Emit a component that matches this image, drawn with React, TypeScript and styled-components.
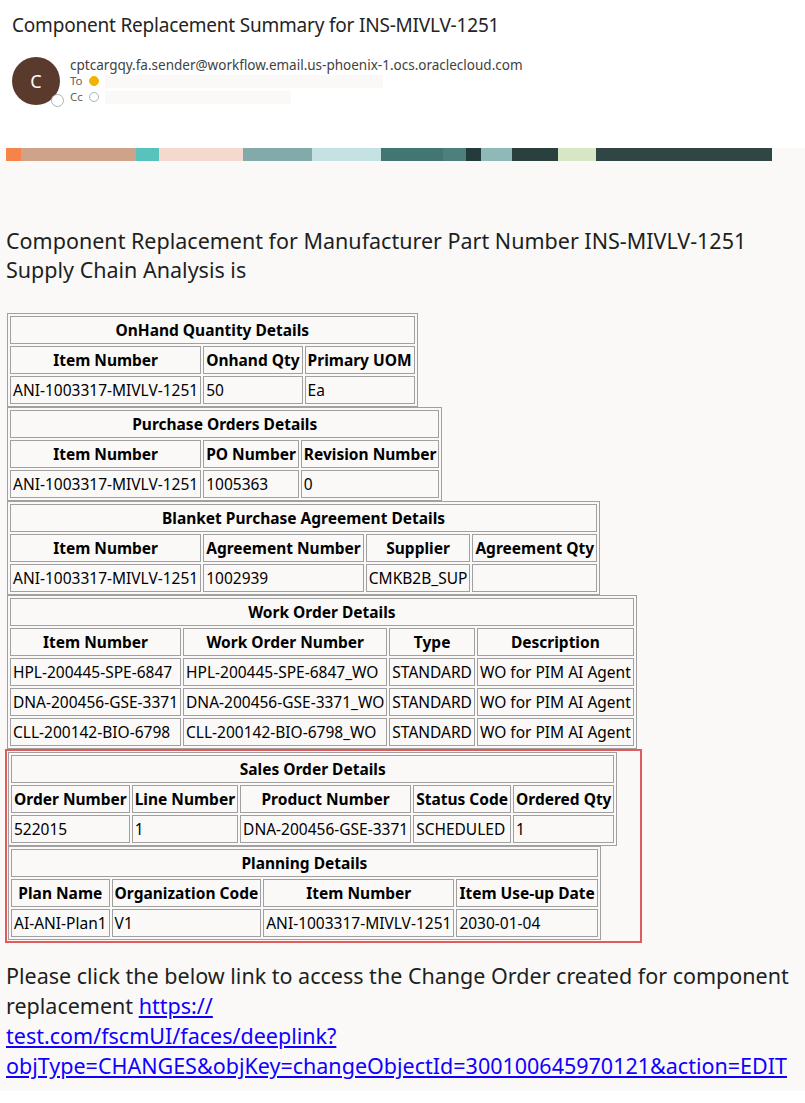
import React from "react";
import styled, { createGlobalStyle } from "styled-components";

const Global = createGlobalStyle`
  body { margin: 0; background: #fff; font-family: "Noto Sans", "Open Sans", sans-serif; color: #201f1e; }
`;

const Header = styled.div`
  background: #fff;
  padding: 12px 12px 0 12px;
  height: 148px;
  box-sizing: border-box;
`;

const Subject = styled.div`
  font-size: 19px;
  color: #242424;
  letter-spacing: -0.2px;
`;

const SenderRow = styled.div`
  display: flex;
  gap: 10px;
  margin-top: 19px;
`;

const Avatar = styled.div`
  position: relative;
  width: 48px;
  height: 48px;
  border-radius: 50%;
  background: #5b3a2e;
  color: #fff;
  display: flex;
  align-items: center;
  justify-content: center;
  font-size: 18px;
  flex-shrink: 0;
`;

const Presence = styled.span`
  position: absolute;
  right: -4px;
  bottom: -2px;
  width: 11px;
  height: 11px;
  border-radius: 50%;
  background: #fff;
  border: 1.5px solid #a8b4bd;
`;

const SenderInfo = styled.div`
  font-size: 13.5px;
  color: #424242;
  line-height: 16px;
`;

const Recip = styled.div`
  display: flex;
  align-items: center;
  gap: 6px;
  font-size: 11.5px;
  color: #616161;
`;

const Dot = styled.span<{ $on?: boolean }>`
  width: 8px;
  height: 8px;
  border-radius: 50%;
  background: ${(p) => (p.$on ? "#f2b200" : "#fff")};
  border: 1px solid ${(p) => (p.$on ? "#f2b200" : "#a8b4bd")};
`;

const Redact = styled.span<{ $w: number }>`
  display: inline-block;
  width: ${(p) => p.$w}px;
  height: 13px;
  background: #faf9f8;
`;

const Body = styled.div`
  background: #faf9f8;
  padding: 0 6px 10px 6px;
`;

const Banner = styled.div`
  width: 766px;
  height: 13px;
  background: linear-gradient(90deg, #f6844a 0 2%, #cfa28a 2% 17%, #58c3bd 17% 20%, #f5d9cf 20% 31%, #82aaa8 31% 40%, #c4e2e2 40% 49%, #427670 49% 57%, #4d7f7c 57% 60%, #233c3a 60% 62%, #8fb9b6 62% 66%, #29403f 66% 72%, #d7e6c4 72% 77%, #2f4644 77% 100%);
`;

const Title = styled.div`
  font-size: 21.5px;
  line-height: 29px;
  margin: 65px 0 29px 0;
  color: #201f1e;
`;

const Table = styled.table`
  border: 1px solid #a0a0a0;
  border-spacing: 2px;
  font-size: 15.5px;
  margin-left: 1px;
  td, th {
    border: 1px solid #a0a0a0;
    padding: 1px 2px;
    height: 24px;
    white-space: nowrap;
    color: #000;
  }
  th { font-weight: 700; text-align: center; }
  td { text-align: left; }
`;

const RedBox = styled.div`
  width: 632px;
  border: 2px solid #e35a5a;
  padding: 1px 1px 1px 0;
  margin-left: -1px;
`;

const Closing = styled.p`
  font-size: 21.5px;
  line-height: 30px;
  margin: 18px 0 0 0;
  color: #201f1e;
  a { color: #0f00ff; text-decoration: underline; word-break: break-word; }
`;

type T = { title: string; heads: string[]; rows: string[][] };

const tables: T[] = [
  { title: "OnHand Quantity Details", heads: ["Item Number", "Onhand Qty", "Primary UOM"], rows: [["ANI-1003317-MIVLV-1251", "50", "Ea"]] },
  { title: "Purchase Orders Details", heads: ["Item Number", "PO Number", "Revision Number"], rows: [["ANI-1003317-MIVLV-1251", "1005363", "0"]] },
  { title: "Blanket Purchase Agreement Details", heads: ["Item Number", "Agreement Number", "Supplier", "Agreement Qty"], rows: [["ANI-1003317-MIVLV-1251", "1002939", "CMKB2B_SUP", ""]] },
  {
    title: "Work Order Details",
    heads: ["Item Number", "Work Order Number", "Type", "Description"],
    rows: [
      ["HPL-200445-SPE-6847", "HPL-200445-SPE-6847_WO", "STANDARD", "WO for PIM AI Agent"],
      ["DNA-200456-GSE-3371", "DNA-200456-GSE-3371_WO", "STANDARD", "WO for PIM AI Agent"],
      ["CLL-200142-BIO-6798", "CLL-200142-BIO-6798_WO", "STANDARD", "WO for PIM AI Agent"],
    ],
  },
];

const highlighted: T[] = [
  { title: "Sales Order Details", heads: ["Order Number", "Line Number", "Product Number", "Status Code", "Ordered Qty"], rows: [["522015", "1", "DNA-200456-GSE-3371", "SCHEDULED", "1"]] },
  { title: "Planning Details", heads: ["Plan Name", "Organization Code", "Item Number", "Item Use-up Date"], rows: [["AI-ANI-Plan1", "V1", "ANI-1003317-MIVLV-1251", "2030-01-04"]] },
];

const DataTable: React.FC<{ t: T }> = ({ t }) => (
  <div>
    <Table>
      <tbody>
        <tr><th colSpan={t.heads.length}>{t.title}</th></tr>
        <tr>{t.heads.map((h) => <th key={h}>{h}</th>)}</tr>
        {t.rows.map((r, i) => (
          <tr key={i}>{r.map((c, j) => <td key={j}>{c}</td>)}</tr>
        ))}
      </tbody>
    </Table>
  </div>
);

const App: React.FC = () => (
  <>
    <Global />
    <Header>
      <Subject>Component Replacement Summary for INS-MIVLV-1251</Subject>
      <SenderRow>
        <Avatar>C<Presence /></Avatar>
        <SenderInfo>
          <div>cptcargqy.fa.sender@workflow.email.us-phoenix-1.ocs.oraclecloud.com</div>
          <Recip>To <Dot $on /> <Redact $w={278} /></Recip>
          <Recip>Cc <Dot /> <Redact $w={186} /></Recip>
        </SenderInfo>
      </SenderRow>
    </Header>
    <Body>
      <Banner />
      <Title>
        Component Replacement for Manufacturer Part Number INS-MIVLV-1251<br />
        Supply Chain Analysis is
      </Title>
      {tables.map((t) => <DataTable key={t.title} t={t} />)}
      <RedBox>
        {highlighted.map((t) => <DataTable key={t.title} t={t} />)}
      </RedBox>
      <Closing>
        Please click the below link to access the Change Order created for component replacement{" "}
        <a href="#">https://<br />test.com/fscmUI/faces/deeplink?<br />objType=CHANGES&amp;objKey=changeObjectId=300100645970121&amp;action=EDIT</a>
      </Closing>
    </Body>
  </>
);

export default App;
